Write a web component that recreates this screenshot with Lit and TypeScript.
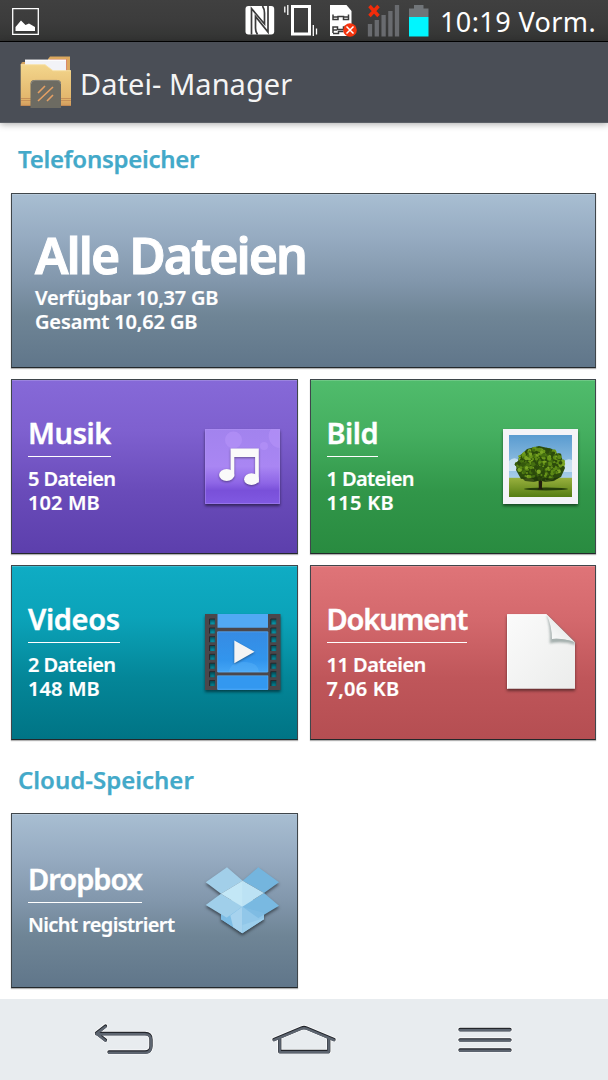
import { LitElement, css, html, svg } from 'lit';
import { customElement, property } from 'lit/decorators.js';
import { styleMap } from 'lit/directives/style-map.js';

// [text, letter spacing in px]
type Label = [string, number];

const leaves = Array.from({ length: 260 }, (_, i) => {
	const a = Math.abs(Math.sin(i * 12.9898) * 43758.5453) % 1;
	const b = Math.abs(Math.sin(i * 78.233) * 12543.123) % 1;
	const r = Math.sqrt(b);
	return {
		x: 37 + Math.cos(a * 6.283) * r * 23.5,
		y: 35 + Math.sin(a * 6.283) * r * 16,
		r: 1 + ((i * 7) % 5) * 0.3,
		c: ['#2c4a0c', '#5d8a16', '#456f10', '#7aa425', '#35580d', '#689519'][(i * 5 + (i % 7)) % 6],
	};
});

const holes = [5, 14, 22.7, 31.5, 40.3, 49.2, 57.7, 66.5];

const icons = {
	music: svg`
		<defs>
			<linearGradient id="m" x2="0" y2="1">
				<stop offset="0" stop-color="#a283ee" />
				<stop offset=".5" stop-color="#a986f3" />
				<stop offset=".72" stop-color="#8e66e6" />
				<stop offset=".82" stop-color="#7950d9" />
				<stop offset="1" stop-color="#8059e2" />
			</linearGradient>
		</defs>
		<rect width="75" height="75" fill="url(#m)" />
		<circle cx="28.5" cy="11" r="8.5" fill="#b592f8" opacity=".6" />
		<path d="M75 0v19a12 12 0 0 1-9-19z" fill="#b592f8" opacity=".6" />
		<circle cx="59" cy="17" r="4" fill="#b592f8" opacity=".6" />
		<rect x=".5" y=".5" width="74" height="74" fill="none" stroke="#b294f5" stroke-opacity=".45" />
		<g class="drop" fill="#fafafa">
			<path d="M25.6 19.5h28.2v34h-3.7V28H29.3v19.5h-3.7z" />
			<ellipse cx="21.7" cy="46" rx="7.6" ry="6" />
			<ellipse cx="46.5" cy="50.2" rx="7.4" ry="5.9" />
		</g>`,
	picture: svg`
		<defs>
			<linearGradient id="s" x2="0" y2="1">
				<stop offset="0" stop-color="#599bd0" />
				<stop offset="1" stop-color="#c9e3f3" />
			</linearGradient>
			<linearGradient id="g" x2="0" y2="1">
				<stop offset="0" stop-color="#99b13e" />
				<stop offset="1" stop-color="#557d12" />
			</linearGradient>
		</defs>
		<rect width="75" height="75" fill="#f3f3f7" />
		<rect x="6" y="6" width="63" height="62" fill="url(#s)" />
		<path d="M6 32q4-4 8-2t5 6-6 6H6zM60 33q4-4 9-2v12h-10z" fill="#e6f1f8" opacity=".65" />
		<rect x="6" y="48.8" width="63" height="19.2" fill="url(#g)" />
		<ellipse cx="43" cy="60" rx="22" ry="1.5" fill="#253d0a" />
		<path d="M35.5 45h4l-.6 14 1.6 1.500h-6l1.300-1.500z" fill="#211c0d" />
		<path d="M13 41l3-13 8-8 12-3 13 3 9 8 4 11-4 9-9 4-7-2-6 2-9-3-9 1z" fill="#2c4c0c" />
		${leaves.map(l => svg`<circle cx=${l.x} cy=${l.y} r=${l.r} fill=${l.c} />`)}
		<path d="M18 48q9 3 17-1 10 4 22 1l-6 4-9 1-5-2-6 2-9-1z" fill="#1c3209" opacity=".75" />`,
	video: svg`
		<defs>
			<linearGradient id="v" x2="0" y2="1">
				<stop offset="0" stop-color="#368be3" />
				<stop offset=".7" stop-color="#3295ed" />
				<stop offset="1" stop-color="#44a5f5" />
			</linearGradient>
		</defs>
		<path fill-rule="evenodd" fill="#4b474b" d="M0 -1h75.5v76H0z
			${holes.map(y => `M4.5 ${y - 1}h5.5v5.5h-5.5zM65.8 ${y - 1}h5.5v5.5h-5.5z`).join('')}" />
		<path fill="none" stroke="#28282d" stroke-width="1"
			d="${holes.map(y => `M4.5 ${y + 4.5}v-5.5h5.5M65.8 ${y + 4.5}v-5.5h5.5`).join('')}" />
		<path d="M12.5-1h50.5v13.7H12.5z" fill="#52a9f4" />
		<rect x="12.5" y="16.5" width="50.5" height="40.8" rx="1" fill="url(#v)" />
		<path d="M24 57q1-10 15-10t15 10z" fill="#62b7fa" opacity=".35" />
		<path d="M12.5 60.7h50.5V75H12.5z" fill="#3398f0" />
		<path d="M12.5 60.7h50.5v13.5H12.5zM12.5 16.8h50.5v40.2H12.5z" fill="none" stroke="#6bbcff" stroke-opacity=".6" stroke-width=".8" />
		<path class="drop" d="M29.3 25.5 49.5 36.8 29.3 48.2z" fill="#f4f4f4" />`,
	document: svg`
		<defs>
			<linearGradient id="d" x2="1" y2="1">
				<stop offset="0" stop-color="#fbfbfb" />
				<stop offset="1" stop-color="#ebeceb" />
			</linearGradient>
			<linearGradient id="f" x1="0" y1="1" x2="1" y2="0">
				<stop offset="0" stop-color="#fff" />
				<stop offset=".5" stop-color="#eceeed" />
				<stop offset="1" stop-color="#a9b5b3" />
			</linearGradient>
		</defs>
		<path d="M4-.7h39.5L72 27.5v46.2H4z" fill="url(#d)" />
		<path d="M43.5 0q4 12 3.200 28.500Q60 26 72 30v-3z" fill="#7f8e8c" opacity=".6" class="soft" />
		<path d="M43.5-.7Q49 11 49 24q12-1 23 3.500z" fill="url(#f)" />
		<path d="M49 24q12-1 23 3.500-10-2-22.500-1z" fill="#a7b2b0" />
		<path d="M4.500 73.500V-.2h39" fill="none" stroke="#fff" />`,
	dropbox: svg`
		<path d="M16 43v13.300l21.300 14 21.700-14V43l-21.500-12z" fill="#8cc3e6" />
		<path d="M22 4.300 37.700 17.700 16 30.700.7 19.300z" fill="#a2cfe9" />
		<path d="M53.300 4.300 74 19.300 59 30 37.700 17.700z" fill="#74b5de" />
		<path d="M16 30.700 37.300 43.700 21.700 54.700.7 42z" fill="#a0cfea" />
		<path d="M59 30 74 42.700 53.300 55.300 37.300 43.700z" fill="#79b9e1" />
		<path d="M37.700 17.700 59 30 37.300 43.700 16 30.700z" fill="#bce2f4" />
		<path d="M37.300 17.700v26L16 30.700z" fill="#c9ebf7" opacity=".5" />
		<path d="M37.300 43.700v26.600L16 56.300v-5l5.700 3.400z" fill="#7dbde5" />
		<path d="M37.300 43.700v26.600l-9-6-3-11.800z" fill="#a7d3ee" />
		<path d="M37.300 43.700 53.300 55.300l5.700-3.500v4.500l-21.700 14z" fill="#9ccfed" />
		<path d="M37.300 43.700 59 50v5L37.300 62z" fill="#85bfe6" opacity=".5" />`,
};

@customElement('storage-tile')
export class StorageTile extends LitElement {
	@property() icon = '';
	@property({ type: Array }) name: Label = ['', 0];
	@property({ type: Array }) lines: Label[] = [];

	static styles = css`
		:host {
			box-sizing: border-box;
			display: flex;
			justify-content: space-between;
			align-items: center;
			height: 175px;
			padding: 0 17px 0 16px;
			border: 1px solid #3f464b;
			border-bottom-color: #23282b;
			box-shadow: inset 0 1px rgba(255, 255, 255, 0.18), 0 1px 1px rgba(0, 0, 0, 0.3);
			background: linear-gradient(#a8bed2, #96abc1 25%, #8297ac 50%, #6f8596 70%, #60768a);
			color: #fff;
			font-weight: 600;
		}

		:host([color='purple']) {
			background: linear-gradient(#8669d8, #7e60cf 30%, #694bb9 65%, #5c3fac);
		}

		:host([color='green']) {
			background: linear-gradient(#50bc6c, #45af60 30%, #319649 65%, #298b40);
		}

		:host([color='teal']) {
			background: linear-gradient(#0facc4, #0ba3b9 30%, #048698 65%, #007485);
		}

		:host([color='red']) {
			background: linear-gradient(#df7478, #d4696d 30%, #bf565a 65%, #b54e52);
		}

		.text {
			display: flex;
			flex-direction: column;
			align-items: flex-start;
			padding-bottom: 6px;
			white-space: nowrap;
		}

		.name {
			height: 43px;
			padding-bottom: 1px;
			margin-bottom: 10px;
			border-bottom: 1px solid #fff;
			font-size: 29px;
			font-stretch: 90%;
			line-height: 41px;
			-webkit-text-stroke: 0.400px #fff;
		}

		.line {
			font-size: 20px;
			line-height: 24.400px;
			-webkit-text-stroke: 0.200px #fff;
		}

		svg {
			flex: none;
			width: 75px;
			height: 75px;
			overflow: visible;
			filter: drop-shadow(0 2px 1.500px rgba(0, 0, 0, 0.5));
		}

		.drop {
			filter: drop-shadow(0 1px 1px rgba(0, 0, 0, 0.4));
		}

		.soft {
			filter: blur(1px);
		}

		:host([wide]) {
			grid-column: span 2;
			padding-left: 23px;
		}

		:host([wide]) .text {
			padding-bottom: 2px;
		}

		:host([wide]) .name {
			height: auto;
			padding: 0;
			margin-bottom: 1px;
			border: 0;
			font-size: 50px;
			line-height: 60px;
			-webkit-text-stroke: 1px #fff;
		}
	`;

	label([text, track]: Label, cls: string) {
		return html`<div class=${cls} style=${styleMap({ letterSpacing: `${track}px` })}>${text}</div>`;
	}

	render() {
		return html`
			<div class="text">
				${this.label(this.name, 'name')}
				${this.lines.map(line => this.label(line, 'line'))}
			</div>
			${this.icon ? html`<svg viewBox="0 0 75 75">${icons[this.icon]}</svg>` : ''}
		`;
	}
}

@customElement('app-root')
export class AppRoot extends LitElement {
	static styles = css`
		:host {
			display: flex;
			flex-direction: column;
			height: 1080px;
			background: #fff;
			font-family: 'Noto Sans', 'Open Sans', sans-serif;
		}

		svg {
			display: block;
		}

		.status {
			box-sizing: border-box;
			display: flex;
			height: 42px;
			border-bottom: 1px solid #000;
			background: linear-gradient(#404040, #3c3c3c 50%, #333433);
			color: #fff;
		}

		.time {
			font-size: 27px;
			line-height: 43px;
			letter-spacing: 0.400px;
			white-space: nowrap;
		}

		header {
			box-sizing: border-box;
			display: flex;
			align-items: center;
			gap: 8px;
			height: 81px;
			padding-left: 20px;
			background: #4a4e56;
			border-bottom: 1px solid #5c6067;
			box-shadow: 0 1px 7px rgba(0, 0, 0, 0.35);
			color: #f4f4f4;
		}

		.title {
			padding-top: 3px;
			font-size: 29px;
			line-height: 40px;
			letter-spacing: 0.050px;
		}

		main {
			flex: 1;
			padding: 0 12px 0 11px;
		}

		h2 {
			margin: 0;
			padding: 0 7px;
			height: 70px;
			font-size: 24px;
			font-weight: 600;
			line-height: 72px;
			letter-spacing: -0.280px;
			color: #43a9c9;
			-webkit-text-stroke: 0.250px #43a9c9;
		}

		.cloud {
			height: 73px;
			line-height: 79px;
			letter-spacing: 0;
		}

		.grid {
			display: grid;
			grid-template-columns: 1fr 1fr;
			gap: 11px 12px;
		}

		nav {
			height: 81px;
			background: #e8ecef;
		}
	`;

	statusIcons() {
		return html`
			<svg width="440" height="41" viewBox="0 0 440 41">
				<path d="M12.700 8.700h25.600v25.600H12.700z" fill="none" stroke="#fff" stroke-width="1.300" />
				<path d="M15.500 31v-4l5.500-6.500 4.500 4.500 3.500-1.500 6 3.500v4z" fill="#fff" />
				<rect x="245.500" y="6" width="28.700" height="28.500" rx="3" fill="#fff" />
				<path d="M251.500 34.500V8.500L264.500 24V13q0-4-2-7M268 6v26L255.500 16.500V28q0 4 2 6.500" fill="none" stroke="#3b3b3b" stroke-width="1.700" />
				<path d="M292.500 6.500h17v27.500h-17z" fill="none" stroke="#fff" stroke-width="3" />
				<path d="M284.800 6.500v6M287.800 5v10M313.300 25v11M316.500 28.500v6" stroke="#fff" stroke-width="1.300" />
				<path d="M330 5h16.500l5 6v25H330z" fill="#fff" />
				<path d="M333 14.500v5h5v-3h5.500v3h5v-5M333 17h4.500M348.500 17H344M333 33.500h5.500v-2h5M333 33v-6h4.500v2.500h6V27h3M333 30h4" fill="none" stroke="#3b3b3b" stroke-width="1.500" />
				<circle cx="350" cy="30" r="6.800" fill="#f4330d" />
				<path d="m346.500 26.500 7 7m0-7-7 7" stroke="#fff" stroke-width="1.500" />
				<path d="M370 24v12.500M376.800 20v16.500M383.600 15v21.500M390.400 11v25.500M397 5v31.500" stroke="#696b6f" stroke-width="4.300" />
				<path d="m369.500 6 9 10m0-10-9 10" stroke="#f22c0a" stroke-width="3.400" />
				<path d="M409 17V8.500h5V5h9.500v3.500h5V17z" fill="#717579" />
				<path d="M409 17h19.500v19.500H409z" fill="#00f6ff" />
			</svg>
		`;
	}

	folderIcon() {
		return html`
			<svg width="52" height="54" viewBox="20 56 52 54">
				<defs>
					<linearGradient id="fold" x2="0" y2="1">
						<stop offset="0" stop-color="#f3d68c" />
						<stop offset=".8" stop-color="#e3b76d" />
						<stop offset="1" stop-color="#d19a5c" />
					</linearGradient>
				</defs>
				<path d="M48 62v-2l2-2.500h20V74H48z" fill="#dca85e" />
				<path d="M50 60h17v14H50z" fill="#d98a68" />
				<path d="M21 66q0-3 2-3h6v8h-8z" fill="#d7a45e" />
				<path d="M25 60.700h41V74H25z" fill="#f2f3f7" />
				<path d="M25 60.700h41v1H25z" fill="#fff" />
				<path d="M20.700 65.500H45l8 6h18V107H20.700z" fill="url(#fold)" />
				<path d="M20.700 65.700H45l8 6h18" fill="none" stroke="#f9e5ad" stroke-width=".8" />
				<path d="M21 99.500h50M21 101.500h50M21 106.500h50" stroke="#bb8250" stroke-width=".7" />
				<path d="M30.500 109V85q0-4 4-4H57q4 0 4 4v24z" fill="#6d6b62" />
				<path d="M31 85q0-3.600 4-3.600H57q3.700 0 3.700 3.600" fill="none" stroke="#8c887c" />
				<path d="m38 94 7-7m-7 15 15-14m-6 14 6-6" stroke="#e5a064" stroke-width="1.600" />
			</svg>
		`;
	}

	navIcons() {
		const shapes = svg`
			<path d="M105.500 1026 96.500 1033l9 7M96.500 1033.500h48.500q6 0 6 6v6.500q0 6-6 6H109" />
			<path d="M274 1039.500 301.500 1028q2.500-1 5 0L334 1039.500M279.700 1039v12.500h49V1039" />
			<path d="M460 1029.500h50M460 1039.800h50M460 1050h50" />
		`;
		return html`
			<svg width="608" height="81" viewBox="0 999 608 81" fill="none" stroke-linecap="round" stroke-linejoin="round">
				<g stroke="#fff" stroke-width="5" opacity=".8">${shapes}</g>
				<g stroke="#22252b" stroke-width="3.300">${shapes}</g>
				<g stroke="#5d6570" stroke-width="2.400" transform="translate(0 .7)">${shapes}</g>
			</svg>
		`;
	}

	render() {
		return html`
			<div class="status">
				${this.statusIcons()}
				<div class="time">10:19 Vorm.</div>
			</div>
			<header>
				${this.folderIcon()}
				<div class="title">Datei- Manager</div>
			</header>
			<main>
				<h2>Telefonspeicher</h2>
				<div class="grid">
					<storage-tile
						wide
						.name=${['Alle Dateien', -2]}
						.lines=${[['Verfügbar 10,37 GB', -0.25], ['Gesamt 10,62 GB', -0.15]]}
					></storage-tile>
					<storage-tile
						color="purple"
						icon="music"
						.name=${['Musik', -0.4]}
						.lines=${[['5 Dateien', -0.6], ['102 MB', 0.1]]}
					></storage-tile>
					<storage-tile
						color="green"
						icon="picture"
						.name=${['Bild', -0.5]}
						.lines=${[['1 Dateien', -0.6], ['115 KB', 0.3]]}
					></storage-tile>
					<storage-tile
						color="teal"
						icon="video"
						.name=${['Videos', -0.35]}
						.lines=${[['2 Dateien', -0.6], ['148 MB', 0.1]]}
					></storage-tile>
					<storage-tile
						color="red"
						icon="document"
						.name=${['Dokument', -1.15]}
						.lines=${[['11 Dateien', -0.5], ['7,06 KB', 0.25]]}
					></storage-tile>
				</div>
				<h2 class="cloud">Cloud-Speicher</h2>
				<div class="grid">
					<storage-tile icon="dropbox" .name=${['Dropbox', -1]} .lines=${[['Nicht registriert', -0.6]]}></storage-tile>
				</div>
			</main>
			<nav>${this.navIcons()}</nav>
		`;
	}
}
